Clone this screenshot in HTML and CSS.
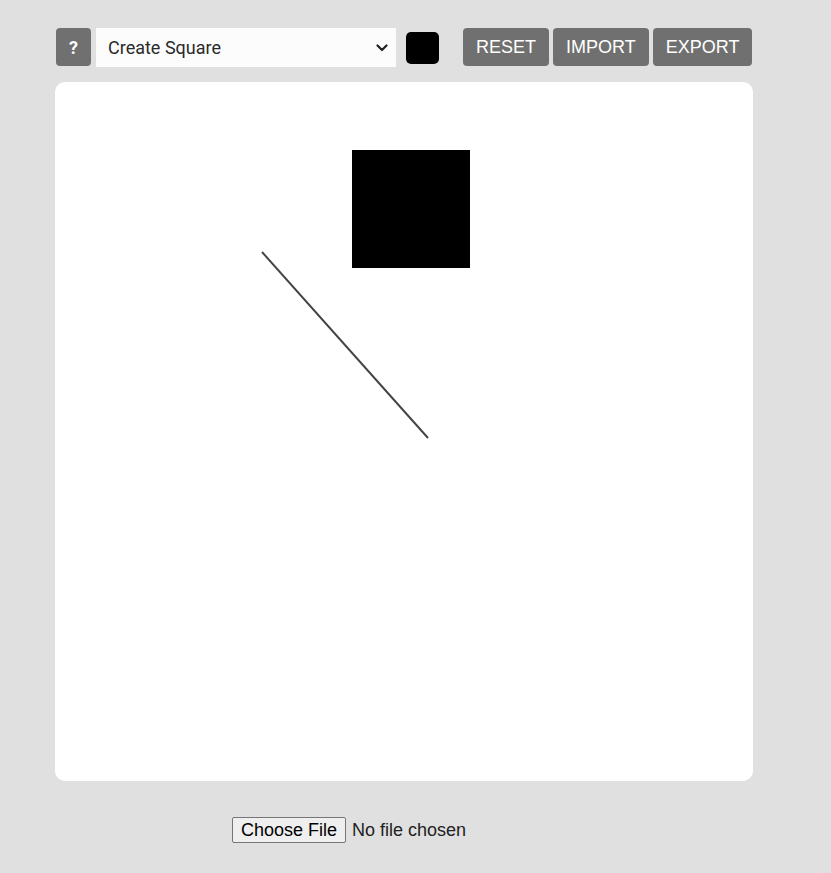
FILE: index.html
```html
<!DOCTYPE html>
<html>
<head>
<meta charset="utf-8">
<link rel="stylesheet" href="styles.css">
</head>
<body>
<div class="page">
  <div class="toolbar">
    <button class="help">?</button>
    <div class="select">
      <span class="select-text">Create Square</span>
      <svg class="chev" width="12" height="8" viewBox="0 0 12 8"><path d="M1.5 1.5 L6 6 L10.5 1.5" fill="none" stroke="#222" stroke-width="2.2" stroke-linecap="round" stroke-linejoin="round"/></svg>
    </div>
    <div class="swatch"></div>
    <div class="actions">
      <button class="btn">RESET</button>
      <button class="btn">IMPORT</button>
      <button class="btn">EXPORT</button>
    </div>
  </div>
  <div class="canvas">
    <svg width="698" height="699" viewBox="0 0 698 699">
      <rect x="297" y="68" width="118" height="118" fill="#000"/>
      <line x1="207" y1="170" x2="373" y2="356" stroke="#444" stroke-width="2"/>
    </svg>
  </div>
  <div class="file-row">
    <input type="file" class="file">
  </div>
</div>
</body>
</html>
```
FILE: styles.css
```css
html, body {
  margin: 0;
  padding: 0;
  background: #e0e0e0;
}
.page {
  padding: 28px 0 0 55px;
}
.toolbar {
  display: flex;
  align-items: center;
  height: 39px;
  padding-left: 1px;
}
.help {
  width: 35px;
  height: 38px;
  border: none;
  border-radius: 4px;
  background: #707070;
  color: #fff;
  font-family: Roboto, "Liberation Sans", sans-serif;
  font-weight: bold;
  font-size: 18px;
  padding: 0;
  align-self: flex-start;
}
.select {
  margin-left: 5px;
  width: 300px;
  height: 39px;
  background: #fcfcfc;
  display: flex;
  align-items: center;
  justify-content: space-between;
  padding: 0 8px 0 12px;
  box-sizing: border-box;
  font-family: Roboto, "Liberation Sans", sans-serif;
  font-size: 18px;
  color: #2a2a2a;
}
.chev {
  display: block;
}
.swatch {
  margin-left: 10px;
  width: 33px;
  height: 32px;
  background: #000;
  border-radius: 5px;
}
.actions {
  margin-left: 24px;
  display: flex;
  gap: 4px;
  align-self: flex-start;
}
.btn {
  height: 38px;
  border: none;
  border-radius: 4px;
  background: #707070;
  color: #fff;
  font-family: "Liberation Sans", Arial, sans-serif;
  font-size: 18px;
  padding: 0 13px;
}
.canvas {
  margin-top: 15px;
  width: 698px;
  height: 699px;
  background: #fff;
  border-radius: 10px;
}
.canvas svg {
  display: block;
}
.file-row {
  margin-top: 36px;
  padding-left: 177px;
}
.file {
  font-family: "Liberation Sans", Arial, sans-serif;
  font-size: 18px;
  color: #222;
}
.file::file-selector-button {
  font-family: "Liberation Sans", Arial, sans-serif;
  font-size: 18px;
  height: 26px;
  padding: 0 8px;
  margin-right: 6px;
  border: 1px solid #767676;
  border-radius: 2px;
  background: #efefef;
  color: #000;
}
```
